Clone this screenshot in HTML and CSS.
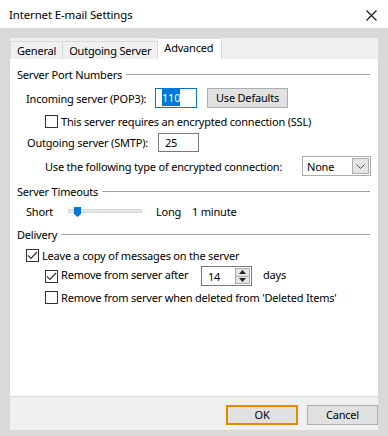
FILE: index.html
```html
<!DOCTYPE html>
<html lang="en">

<head>
    <meta charset="UTF-8">
    <title>Internet E-mail Settings</title>
    <link rel="stylesheet" href="styles.css">
</head>

<body>
    <div class="titlebar">
        <span class="title">Internet E-mail Settings</span>
        <svg class="close" width="11" height="11" viewBox="0 0 11 11">
            <path d="M0.5 0.5 L10.5 10.5 M10.5 0.5 L0.5 10.5" stroke="#111" stroke-width="1.1" fill="none"/>
        </svg>
    </div>

    <div class="frame">
        <div class="dialog">
            <div class="tabs">
                <div class="tab">General</div>
                <div class="tab">Outgoing Server</div>
                <div class="tab active">Advanced</div>
            </div>

            <div class="page">
                <div class="group-title first"><span>Server Port Numbers</span><i></i></div>

                <div class="row incoming">
                    <span class="label lbl-in">Incoming server (POP3):</span>
                    <div class="textbox focus tb-in"><span class="sel">110</span></div>
                    <div class="btn defaults">Use Defaults</div>
                </div>

                <div class="row check ssl">
                    <span class="box"></span>
                    <span>This server requires an encrypted connection (SSL)</span>
                </div>

                <div class="row outgoing">
                    <span class="label lbl-out">Outgoing server (SMTP):</span>
                    <div class="textbox tb-out">25</div>
                </div>

                <div class="row enc">
                    <span class="label lbl-enc">Use the following type of encrypted connection:</span>
                    <div class="select">
                        <span>None</span>
                        <span class="arrow">
                            <svg width="9" height="5" viewBox="0 0 9 5"><path d="M0.5 0.5 L4.5 4.5 L8.5 0.5" stroke="#555" fill="none"/></svg>
                        </span>
                    </div>
                </div>

                <div class="group-title"><span>Server Timeouts</span><i></i></div>

                <div class="row timeout">
                    <span class="short">Short</span>
                    <div class="slider">
                        <svg class="thumb" width="7" height="10" viewBox="0 0 7 10"><path d="M0 0 H7 V7 L3.5 10 L0 7 Z" fill="#0078d7"/></svg>
                    </div>
                    <span class="long">Long</span>
                    <span class="minute">1 minute</span>
                </div>

                <div class="group-title"><span>Delivery</span><i></i></div>

                <div class="row check leave">
                    <span class="box checked">
                        <svg width="11" height="9" viewBox="0 0 11 9"><path d="M1 4.5 L4 7.5 L10 1" stroke="#333" stroke-width="1.2" fill="none"/></svg>
                    </span>
                    <span>Leave a copy of messages on the server</span>
                </div>

                <div class="row check after">
                    <span class="box checked">
                        <svg width="11" height="9" viewBox="0 0 11 9"><path d="M1 4.5 L4 7.5 L10 1" stroke="#333" stroke-width="1.2" fill="none"/></svg>
                    </span>
                    <span class="lbl-after">Remove from server after</span>
                    <div class="spin">
                        <span class="spin-val">14</span>
                        <div class="spin-btns">
                            <span class="up"><svg width="7" height="4" viewBox="0 0 7 4"><path d="M0 4 L3.5 0 L7 4 Z" fill="#222"/></svg></span>
                            <span class="down"><svg width="7" height="4" viewBox="0 0 7 4"><path d="M0 0 L3.5 4 L7 0 Z" fill="#222"/></svg></span>
                        </div>
                    </div>
                    <span class="days">days</span>
                </div>

                <div class="row check deleted">
                    <span class="box"></span>
                    <span>Remove from server when deleted from 'Deleted Items'</span>
                </div>
            </div>

            <div class="footer">
                <div class="btn ok">OK</div>
                <div class="btn cancel">Cancel</div>
            </div>
        </div>
    </div>
</body>

</html>
```

FILE: styles.css
```css
body {
    margin: 0;
    font-family: 'Noto Sans', sans-serif;
    font-size: 11px;
    letter-spacing: -0.2px;
    color: #000;
    background-color: #d9d9d9;
    width: 388px;
    height: 436px;
    overflow: hidden;
    white-space: nowrap;
}

.titlebar {
    height: 28px;
    background-color: #fff;
    display: flex;
    align-items: center;
    justify-content: space-between;
    padding: 0 11px 0 9px;
}

.title {
    font-size: 11.4px;
    letter-spacing: -0.1px;
}

.close {
    display: block;
    margin-top: 2px;
}

.frame {
    padding: 10px 10px 6px;
}

.dialog {
    background-color: #f0f0f0;
    height: 392px;
    display: flex;
    flex-direction: column;
}

.tabs {
    height: 21px;
    display: flex;
    align-items: flex-end;
}

.tab {
    height: 18px;
    line-height: 18px;
    padding: 0 6px;
    border: 1px solid #d9d9d9;
    border-bottom: none;
    border-left: none;
    box-sizing: border-box;
    background-color: #f0f0f0;
}

.tab:first-child {
    border-left: 1px solid #d9d9d9;
}

.tab.active {
    height: 21px;
    line-height: 17px;
    background-color: #fff;
    padding: 0 8px 0 6px;
}

.page {
    background-color: #fff;
    height: 338px;
    border-bottom: 1px solid #dcdcdc;
    padding: 0 8px 0 7px;
    box-sizing: border-box;
    display: flex;
    flex-direction: column;
}

.group-title {
    height: 16px;
    display: flex;
    align-items: center;
    margin-top: 7px;
}

.group-title i {
    flex: 1;
    height: 1px;
    background-color: #a0a0a0;
    margin-left: 4px;
}

.row {
    display: flex;
    align-items: center;
}

.row > * {
    flex-shrink: 0;
}

.textbox {
    height: 20px;
    box-sizing: border-box;
    border: 1px solid #7a7a7a;
    padding-left: 6px;
    line-height: 18px;
}

.textbox.focus {
    border-color: #0078d7;
}

.sel {
    background-color: #0078d7;
    color: #fff;
    padding: 1px 0;
}

.btn {
    box-sizing: border-box;
    height: 20px;
    line-height: 18px;
    text-align: center;
    background-color: #e1e1e1;
    border: 1px solid #adadad;
}

.incoming {
    height: 20px;
    margin-top: 6px;
    padding-left: 9px;
}

.lbl-in {
    width: 129px;
}

.tb-in {
    width: 42px;
}

.defaults {
    width: 81px;
    margin-left: 10px;
}

.check .box {
    width: 13px;
    height: 13px;
    box-sizing: border-box;
    border: 1px solid #333;
    margin-right: 3px;
    display: flex;
    align-items: center;
    justify-content: center;
}

.ssl {
    height: 16px;
    margin-top: 5px;
    padding-left: 28px;
}

.outgoing {
    height: 19px;
    margin-top: 4px;
    padding-left: 10px;
}

.lbl-out {
    width: 131px;
}

.tb-out {
    width: 41px;
    height: 19px;
    line-height: 17px;
}

.enc {
    height: 20px;
    margin-top: 4px;
    padding-left: 28px;
}

.lbl-enc {
    width: 257px;
}

.select {
    width: 69px;
    height: 20px;
    box-sizing: border-box;
    border: 1px solid #acacac;
    display: flex;
    align-items: center;
    justify-content: space-between;
    padding: 0 1px 0 4px;
}

.select .arrow {
    width: 17px;
    height: 16px;
    box-sizing: border-box;
    background-color: #e5e5e5;
    border: 1px solid #acacac;
    display: flex;
    align-items: center;
    justify-content: center;
}

.timeout {
    height: 16px;
    margin-top: 4px;
    padding-left: 9px;
}

.short {
    width: 42px;
}

.slider {
    width: 74px;
    height: 4px;
    box-sizing: border-box;
    background-color: #e7e7e7;
    border: 1px solid #d6d6d6;
    position: relative;
}

.thumb {
    position: absolute;
    left: 5px;
    top: -3px;
}

.long {
    margin-left: 14px;
    width: 36px;
}

.leave {
    height: 16px;
    margin-top: 5px;
    padding-left: 9px;
}

.after {
    height: 20px;
    margin-top: 3px;
    padding-left: 28px;
}

.lbl-after {
    width: 140px;
    margin-top: -3px;
}

.spin {
    width: 51px;
    height: 20px;
    box-sizing: border-box;
    border: 1px solid #7a7a7a;
    display: flex;
    justify-content: space-between;
    align-items: center;
    padding: 0 1px 0 6px;
}

.spin-val {
    line-height: 18px;
    margin-top: 2px;
}

.spin-btns {
    width: 15px;
    height: 16px;
    display: flex;
    flex-direction: column;
}

.spin-btns span {
    flex: 1;
    background-color: #e5e5e5;
    border: 1px solid #acacac;
    display: flex;
    align-items: center;
    justify-content: center;
}

.spin-btns .down {
    border-top: none;
}

.days {
    margin-left: 11px;
    margin-top: -3px;
}

.deleted {
    height: 16px;
    margin-top: 3px;
    padding-left: 28px;
}

.footer {
    flex: 1;
    display: flex;
    justify-content: flex-end;
    align-items: center;
    padding-top: 2px;
}

.ok {
    width: 72px;
    border: 2px solid #e08a00;
    line-height: 16px;
}

.cancel {
    width: 71px;
    margin-left: 9px;
}
```
